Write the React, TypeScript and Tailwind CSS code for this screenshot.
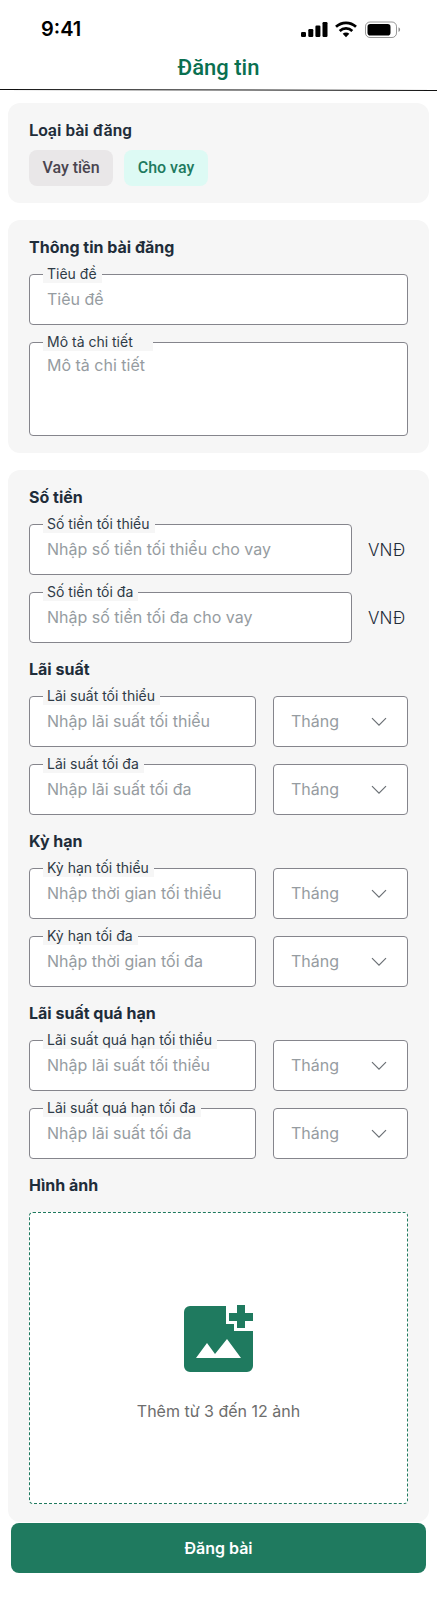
import React, { useId, useState } from 'react';

function StatusBar() {
  return (
    <div className="flex h-[54px] items-center justify-between pt-[3px] pl-[41px] pr-9">
      <span className="text-[20px] leading-6 font-semibold text-black">9:41</span>
      <svg width="100" height="18" viewBox="0 0 100 18" aria-hidden="true">
        <g fill="#000">
          <rect x="0" y="12" width="5" height="5" rx="1.2" />
          <rect x="7.300" y="9" width="5" height="8" rx="1.200" />
          <rect x="14.400" y="5.500" width="5" height="11.500" rx="1.200" />
          <rect x="21.500" y="2" width="5" height="15" rx="1.200" />
          <rect x="66.500" y="4" width="23" height="11.500" rx="2.800" />
          <path d="M97.500 7.300v4.600c1-.4 1.600-1.300 1.600-2.300s-.6-1.900-1.600-2.300z" opacity=".45" />
          <path d="M45 12.500c-1.300 0-2.400.4-3.300 1.200L45 17.200l3.300-3.500c-.9-.8-2-1.200-3.300-1.200z" />
        </g>
        <g fill="none" stroke="#000" strokeWidth="2.700">
          <path d="M35 6.800C37.800 4.200 41.200 2.800 45 2.800s7.200 1.400 10 4" />
          <path d="M38.700 10.900c1.800-1.700 3.900-2.500 6.300-2.500s4.500.8 6.300 2.500" />
        </g>
        <rect x="64.500" y="2" width="31" height="15.500" rx="4.500" fill="none" stroke="#000" strokeOpacity=".4" />
      </svg>
    </div>
  );
}

function Heading({ children }: { children: React.ReactNode }) {
  return <h2 className="text-[16px] leading-6 font-bold text-[#1f2d3a]">{children}</h2>;
}

function Field({ label, placeholder, multiline = false }: { label: string; placeholder: string; multiline?: boolean }) {
  const id = useId();
  const box =
    'block w-full rounded-[4px] border border-[#85858c] bg-white px-[17px] text-[16px] leading-6 text-[#1f2d3a] placeholder:text-[#969ca1] placeholder:opacity-100 outline-none focus:border-[#1f7a5f]';
  return (
    <div className="relative min-w-0 flex-1">
      {multiline ? (
        <textarea id={id} placeholder={placeholder} className={`${box} h-[94px] resize-none pt-[10px]`} />
      ) : (
        <input id={id} placeholder={placeholder} className={`${box} h-[51px] pb-[2px]`} />
      )}
      <label
        htmlFor={id}
        className={`absolute -top-[9px] left-[14px] bg-[#f6f6f6] pl-1 text-[14px] leading-[18px] text-[#2f3b47] ${multiline ? 'pr-5' : 'pr-[5px]'}`}
      >
        {label}
      </label>
    </div>
  );
}

function UnitSelect({ name }: { name: string }) {
  return (
    <div className="relative w-[135px] shrink-0">
      <select
        aria-label={name}
        className="block h-[51px] w-full appearance-none rounded-[4px] border border-[#85858c] bg-white px-[17px] pb-[2px] text-[16px] leading-6 text-[#969ca1] outline-none focus:border-[#1f7a5f]"
      >
        <option>Tháng</option>
        <option>Năm</option>
      </select>
      <svg
        className="pointer-events-none absolute top-[21px] right-[21px]"
        width="16"
        height="10"
        viewBox="0 0 16 10"
        fill="none"
        stroke="#6b7075"
        strokeWidth="1.200"
        aria-hidden="true"
      >
        <path d="M1 1.200l7 7 7-7" />
      </svg>
    </div>
  );
}

function MoneyRow({ label, placeholder }: { label: string; placeholder: string }) {
  return (
    <div className="flex items-center">
      <Field label={label} placeholder={placeholder} />
      <span className="w-14 shrink-0 pl-4 text-[17px] leading-6 font-light text-[#1f2d3a]">VNĐ</span>
    </div>
  );
}

function TermRow({ label, placeholder }: { label: string; placeholder: string }) {
  return (
    <div className="flex gap-[17px]">
      <Field label={label} placeholder={placeholder} />
      <UnitSelect name={`${label} - đơn vị`} />
    </div>
  );
}

function Group({ title, children }: { title: string; children: React.ReactNode }) {
  return (
    <div className="flex flex-col gap-[15px]">
      <Heading>{title}</Heading>
      <div className="flex flex-col gap-[17px]">{children}</div>
    </div>
  );
}

const kinds = ['Vay tiền', 'Cho vay'];

export default function App() {
  const [kind, setKind] = useState('Cho vay');
  return (
    <div className="min-h-screen bg-white pb-6 font-['Inter',sans-serif]">
      <header>
        <StatusBar />
        <h1 className="pb-[7px] text-center font-['Roboto',sans-serif] text-[22px] leading-7 font-medium text-[#0a7050]">Đăng tin</h1>
        <svg className="block w-full" height="2" viewBox="0 0 437 2" preserveAspectRatio="none" aria-hidden="true">
          <path d="M0 0L437 1V2L0 1z" fill="#111" />
        </svg>
      </header>

      <main className="mx-2 mt-3 flex flex-col gap-[17px]">
        <section className="rounded-xl bg-[#f6f6f6] px-[21px] pt-[15px] pb-[17px] font-['Roboto',sans-serif]">
          <h2 className="text-[17px] leading-6 font-semibold text-[#1f2d3a]">Loại bài đăng</h2>
          <div className="mt-2 flex gap-[11px]">
            {kinds.map((k) => (
              <button
                key={k}
                type="button"
                aria-pressed={k === kind}
                onClick={() => setKind(k)}
                className={`h-9 w-[84px] rounded-lg text-[16px] leading-5 font-medium ${
                  k === kind ? 'bg-[#ddfaf4] text-[#1f7a5f]' : 'bg-[#e9e7e8] text-[#49454f]'
                }`}
              >
                {k}
              </button>
            ))}
          </div>
        </section>

        <section className="rounded-xl bg-[#f6f6f6] px-[21px] pt-[15px] pb-[17px]">
          <Group title="Thông tin bài đăng">
            <Field label="Tiêu đề" placeholder="Tiêu đề" />
            <Field label="Mô tả chi tiết" placeholder="Mô tả chi tiết" multiline />
          </Group>
        </section>

        <section className="flex flex-col gap-[14px] rounded-xl bg-[#f6f6f6] px-[21px] pt-[15px] pb-[18px]">
          <Group title="Số tiền">
            <MoneyRow label="Số tiền tối thiểu" placeholder="Nhập số tiền tối thiểu cho vay" />
            <MoneyRow label="Số tiền tối đa" placeholder="Nhập số tiền tối đa cho vay" />
          </Group>
          <Group title="Lãi suất">
            <TermRow label="Lãi suất tối thiểu" placeholder="Nhập lãi suất tối thiểu" />
            <TermRow label="Lãi suất tối đa" placeholder="Nhập lãi suất tối đa" />
          </Group>
          <Group title="Kỳ hạn">
            <TermRow label="Kỳ hạn tối thiểu" placeholder="Nhập thời gian tối thiểu" />
            <TermRow label="Kỳ hạn tối đa" placeholder="Nhập thời gian tối đa" />
          </Group>
          <Group title="Lãi suất quá hạn">
            <TermRow label="Lãi suất quá hạn tối thiểu" placeholder="Nhập lãi suất tối thiểu" />
            <TermRow label="Lãi suất quá hạn tối đa" placeholder="Nhập lãi suất tối đa" />
          </Group>
          <Group title="Hình ảnh">
            <button
              type="button"
              className="flex h-[292px] w-full flex-col items-center justify-center gap-[26px] rounded-[4px] border border-dashed border-[#1f7a5f] bg-white pt-3"
            >
              <svg width="69" height="68" viewBox="0 0 69 68" fill="#1f7a5f" aria-hidden="true">
                <path d="M6 1h36v18h8v7h19v35a6 6 0 0 1-6 6H6a6 6 0 0 1-6-6V7a6 6 0 0 1 6-6z" />
                <path d="M53 0h8v8h8v8h-8v7h-8v-7h-8V8h8z" />
                <path d="M12 53l11-15 8 11 12-15 14 19z" fill="#fff" />
              </svg>
              <span className="text-[16px] leading-6 text-[#6d6d6d]">Thêm từ 3 đến 12 ảnh</span>
            </button>
          </Group>
        </section>
      </main>

      <div className="px-[11px] pt-px">
        <button type="button" className="block h-[50px] w-full rounded-lg bg-[#1f7a5f] text-[16px] leading-6 font-semibold text-white">
          Đăng bài
        </button>
      </div>
    </div>
  );
}
